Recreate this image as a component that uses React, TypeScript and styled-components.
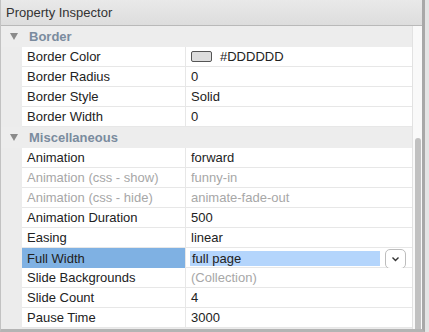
import styled, { createGlobalStyle } from "styled-components";

const GlobalStyle = createGlobalStyle`
    html, body {
        margin: 0;
        padding: 0;
        background: #e4e4e4;
    }
    body {
        font-family: "Liberation Sans", Arial, sans-serif;
        font-size: 13px;
        color: #222;
    }
`

const Panel = styled.div`
    display: flex;
    flex-direction: column;
    width: 421px;
    height: 329px;
    background: #ececec;
    border-left: 1px solid #c2c2c2;
    border-right: 3px solid #a8a8a8;
    border-bottom: 3px solid #b4b4b4;
    overflow: hidden;
`

const TitleBar = styled.div`
    display: flex;
    align-items: center;
    height: 25px;
    flex: none;
    padding-left: 5px;
    background: linear-gradient(#e9e9e9, #dddddd);
    border-bottom: 1px solid #b9b9b9;
    color: #333;
    font-size: 13px;
`

const Body = styled.div`
    display: flex;
    flex: 1;
    min-height: 0;
`

const Grid = styled.div`
    flex: 1;
    display: flex;
    flex-direction: column;
`

const Scrollbar = styled.div`
    position: relative;
    width: 9px;
    flex: none;
    background: #f9f9f9;
    border-left: 1px solid #e2e2e2;
`

const Thumb = styled.div`
    position: absolute;
    left: 2px;
    right: 1px;
    top: 112px;
    bottom: -6px;
    border-radius: 4px;
    background: #c1c1c1;
`

const SectionHead = styled.div`
    display: flex;
    align-items: center;
    height: 21px;
    background: #ededed;
    color: #7a8b9e;
    font-weight: bold;
    font-size: 13px;
`

const Triangle = styled.span`
    width: 0;
    height: 0;
    margin: 0 11px 0 9px;
    border-left: 4px solid transparent;
    border-right: 4px solid transparent;
    border-top: 7px solid #8a8a8a;
`

const Row = styled.div`
    display: grid;
    grid-template-columns: 164px 1fr;
    height: 19px;
    margin-left: 21px;
    background: #fff;
    border-bottom: 1px solid #e7e7e7;
`

const Name = styled.div<{ $dim?: boolean; $selected?: boolean }>`
    display: flex;
    align-items: center;
    padding-left: 5px;
    border-right: 1px solid #e7e7e7;
    background: ${p => (p.$selected ? "#7fb1e3" : "transparent")};
    color: ${p => (p.$dim ? "#a7a7a7" : "#222")};
    white-space: nowrap;
`

const Value = styled.div<{ $dim?: boolean }>`
    display: flex;
    align-items: center;
    padding-left: 5px;
    gap: 8px;
    color: ${p => (p.$dim ? "#a7a7a7" : "#222")};
    white-space: nowrap;
`

const Swatch = styled.span`
    width: 19px;
    height: 9px;
    border: 1px solid #555;
    border-radius: 2px;
    background: #dddddd;
`

const EditCell = styled.div`
    display: flex;
    align-items: center;
    gap: 5px;
    padding-left: 4px;
`

const EditBox = styled.div`
    display: flex;
    align-items: center;
    width: 188px;
    height: 15px;
    padding-left: 2px;
    background: #b4d5fc;
    color: #222;
`

const DropButton = styled.div`
    display: flex;
    align-items: center;
    justify-content: center;
    width: 21px;
    height: 20px;
    margin-top: 1px;
    background: #fff;
    border: 1px solid #bdbdbd;
    border-radius: 5px;
    box-sizing: border-box;
`

type Prop = { name: string; value: string; dim?: boolean; valueDim?: boolean; swatch?: boolean }

const border: Prop[] = [
    { name: "Border Color", value: "#DDDDDD", swatch: true },
    { name: "Border Radius", value: "0" },
    { name: "Border Style", value: "Solid" },
    { name: "Border Width", value: "0" },
]

const misc: Prop[] = [
    { name: "Animation", value: "forward" },
    { name: "Animation (css - show)", value: "funny-in", dim: true, valueDim: true },
    { name: "Animation (css - hide)", value: "animate-fade-out", dim: true, valueDim: true },
    { name: "Animation Duration", value: "500" },
    { name: "Easing", value: "linear" },
]

const miscAfter: Prop[] = [
    { name: "Slide Backgrounds", value: "(Collection)", valueDim: true },
    { name: "Slide Count", value: "4" },
    { name: "Pause Time", value: "3000" },
]

function PropRow({ p }: { p: Prop }) {
    return (
        <Row>
            <Name $dim={p.dim}>{p.name}</Name>
            <Value $dim={p.valueDim}>
                {p.swatch && <Swatch />}
                {p.value}
            </Value>
        </Row>
    )
}

export default function App() {
    return (
        <>
            <GlobalStyle />
            <Panel>
                <TitleBar>Property Inspector</TitleBar>
                <Body>
                    <Grid>
                        <SectionHead><Triangle />Border</SectionHead>
                        {border.map(p => <PropRow key={p.name} p={p} />)}
                        <SectionHead><Triangle />Miscellaneous</SectionHead>
                        {misc.map(p => <PropRow key={p.name} p={p} />)}
                        <Row>
                            <Name $selected>Full Width</Name>
                            <EditCell>
                                <EditBox>full page</EditBox>
                                <DropButton>
                                    <svg width="9" height="6" viewBox="0 0 9 6">
                                        <path d="M1.5 1.5 L4.5 4.5 L7.5 1.5" fill="none" stroke="#333" strokeWidth="1.4" />
                                    </svg>
                                </DropButton>
                            </EditCell>
                        </Row>
                        {miscAfter.map(p => <PropRow key={p.name} p={p} />)}
                    </Grid>
                    <Scrollbar>
                        <Thumb />
                    </Scrollbar>
                </Body>
            </Panel>
        </>
    )
}
